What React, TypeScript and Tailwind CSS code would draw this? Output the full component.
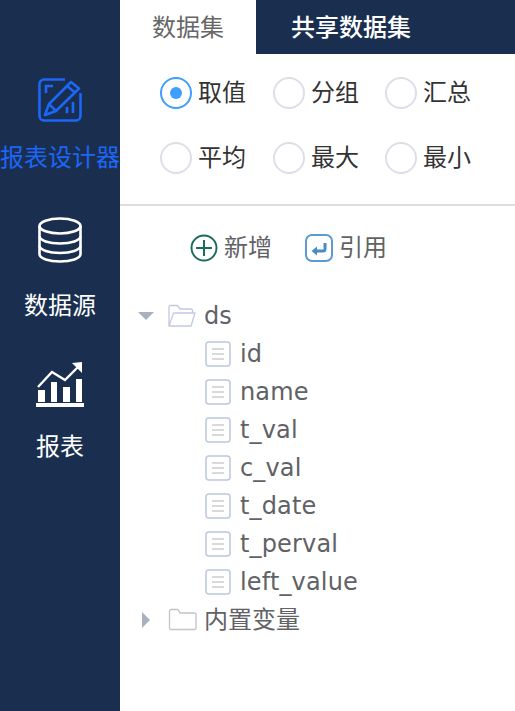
import type { ReactNode } from 'react';

const font = { fontFamily: '"DejaVu Sans", "Noto Sans CJK SC", sans-serif' };

function DesignIcon() {
  return (
    <svg width="44" height="44" viewBox="0 0 44 44" fill="none" stroke="#1c66f8" strokeWidth="2.6">
      <path d="M27 1.5H6a4.500 4.500 0 0 0-4.500 4.500v32A4.500 4.500 0 0 0 6 42.500h32a4.500 4.500 0 0 0 4.500-4.500V15" />
      <path d="M8 15V8h7" />
      <path d="M7 37 11 26 33 4l8 6.500L18 33z" strokeLinejoin="round" />
      <path d="M11 26l7 7M29 8l8 6.500" />
      <path d="M29 35v-6M35 35V24" />
    </svg>
  );
}

function DatabaseIcon() {
  return (
    <svg width="44" height="46" viewBox="0 0 44 46" fill="none" stroke="#fff" strokeWidth="2.6">
      <ellipse cx="22" cy="9" rx="20.5" ry="7.5" />
      <path d="M1.5 9v28c0 4.500 9.500 7.500 20.500 7.500s20.500-3 20.500-7.500V9" />
      <path d="M1.500 19c0 4.500 9.500 7.500 20.500 7.500s20.500-3 20.500-7.500" />
      <path d="M1.500 28.500c0 4.500 9.500 7.500 20.500 7.500s20.500-3 20.500-7.500" />
    </svg>
  );
}

function ReportIcon() {
  return (
    <svg width="48" height="46" viewBox="0 0 48 46" fill="#fff">
      <path d="M2 25 16 10l13 8L44 3" fill="none" stroke="#fff" strokeWidth="2.4" />
      <path d="M36 1 46 0v11z" />
      <rect x="2" y="28" width="7" height="12" />
      <rect x="15" y="20" width="6" height="20" />
      <rect x="27" y="25" width="7" height="15" />
      <rect x="40" y="17" width="6" height="23" />
      <rect x="0" y="41" width="48" height="4" />
    </svg>
  );
}

function Radio({ label, checked }: { label: string; checked?: boolean }) {
  return (
    <div className="flex items-center gap-[6px]">
      {checked ? (
        <span className="flex h-8 w-8 items-center justify-center rounded-full border-2 border-[#409eff]">
          <span className="h-3 w-3 rounded-full bg-[#409eff]" />
        </span>
      ) : (
        <span className="h-8 w-8 rounded-full border-2 border-[#dcdfe6]" />
      )}
      <span className="-mt-px text-2xl leading-8 text-[#333]">{label}</span>
    </div>
  );
}

function SideItem({ icon, label, className, labelClass }: { icon: ReactNode; label: string; className: string; labelClass: string }) {
  return (
    <div className={`flex flex-col items-center ${className}`}>
      <div className="flex h-12 items-center justify-center">{icon}</div>
      <span className={`whitespace-nowrap text-2xl leading-8 ${labelClass}`}>{label}</span>
    </div>
  );
}

function FileIcon() {
  return (
    <svg width="26" height="26" viewBox="0 0 26 26" fill="none" className="shrink-0">
      <rect x="1" y="1" width="24" height="24" rx="3" stroke="#bcc8df" strokeWidth="1.500" />
      <path d="M7 8h12M7 13h12M7 18h12" stroke="#b4b4b4" strokeWidth="1.200" />
    </svg>
  );
}

function FileRow({ name }: { name: string }) {
  return (
    <div className="flex h-[38px] items-center gap-[9px] pl-[85px]">
      <FileIcon />
      <span className="text-2xl leading-8 tracking-[0.15px] text-[#606266]">{name}</span>
    </div>
  );
}

export default function App() {
  return (
    <div className="flex h-[711px] w-[515px] overflow-hidden bg-white" style={font}>
      <aside className="flex w-[120px] shrink-0 flex-col bg-[#1a2f50] text-white">
        <SideItem icon={<DesignIcon />} label="报表设计器" className="mt-[76px] text-[#1c66f8]" labelClass="mt-[18px]" />
        <SideItem icon={<DatabaseIcon />} label="数据源" className="mt-[42px]" labelClass="mt-[26px]" />
        <SideItem icon={<ReportIcon />} label="报表" className="mt-[39px]" labelClass="mt-[22px]" />
      </aside>

      <main className="flex flex-1 flex-col">
        <div className="flex h-[54px] text-2xl">
          <div className="flex w-[136px] items-center pl-8 pt-px text-[#666]">数据集</div>
          <div className="flex flex-1 items-center bg-[#1a2f50] pl-[35px] pt-px font-medium text-white">共享数据集</div>
        </div>

        <div className="grid h-[152px] grid-cols-[113px_112px_1fr] content-start gap-y-[33px] border-b-2 border-[#ddd] pl-10 pt-[23px]">
          <Radio label="取值" checked />
          <Radio label="分组" />
          <Radio label="汇总" />
          <Radio label="平均" />
          <Radio label="最大" />
          <Radio label="最小" />
        </div>

        <div className="mt-[26px] flex h-8 items-center pl-[70px] text-2xl leading-8 text-[#606266]">
          <svg width="28" height="28" viewBox="0 0 28 28" fill="none" stroke="#1c6b5c" strokeWidth="2">
            <circle cx="14" cy="14" r="12.500" />
            <path d="M14 6v16M6 14h16" />
          </svg>
          <span className="ml-[6px]">新增</span>
          <svg width="28" height="28" viewBox="0 0 28 28" fill="none" className="ml-[33px]">
            <rect x="1" y="1" width="26" height="26" rx="6" stroke="#5b9bd0" strokeWidth="2" />
            <path d="M20 9v6a2 2 0 0 1-2 2H9" stroke="#4a8cc2" strokeWidth="3" />
            <path d="M6.500 17 12 12.500v9z" fill="#4a8cc2" />
          </svg>
          <span className="ml-[6px]">引用</span>
        </div>

        <div className="mt-[33px] flex h-[38px] items-center pl-[18px]">
          <span className="h-0 w-0 border-x-[8px] border-t-[8px] border-x-transparent border-t-[#a9b1c0]" />
          <svg width="30" height="24" viewBox="0 0 30 24" fill="none" stroke="#c3c9de" strokeWidth="1.300" className="ml-[13px]">
            <path d="M2 22V3a1.500 1.500 0 0 1 1.500-1.500h7L13 5h11a1.500 1.500 0 0 1 1.500 1.500V9" />
            <path d="M2 22 6.500 9H28l-4 13z" strokeLinejoin="round" />
          </svg>
          <span className="ml-[7px] text-2xl leading-8 text-[#606266]">ds</span>
        </div>
        {['id', 'name', 't_val', 'c_val', 't_date', 't_perval', 'left_value'].map((n) => (
          <FileRow key={n} name={n} />
        ))}
        <div className="flex h-[38px] items-center pl-[22px]">
          <span className="h-0 w-0 border-y-[8px] border-l-[8px] border-y-transparent border-l-[#a9b1c0]" />
          <svg width="30" height="24" viewBox="0 0 30 24" fill="none" stroke="#c4c4c4" strokeWidth="1.300" className="ml-[18px]">
            <path d="M1.500 20V3a1.500 1.500 0 0 1 1.500-1.500h7L12 5h14.500A1.500 1.500 0 0 1 28 6.500V20a1.500 1.500 0 0 1-1.500 1.500H3A1.500 1.500 0 0 1 1.500 20z" />
          </svg>
          <span className="ml-[6px] text-2xl leading-8 text-[#606266]">内置变量</span>
        </div>
      </main>
    </div>
  );
}
